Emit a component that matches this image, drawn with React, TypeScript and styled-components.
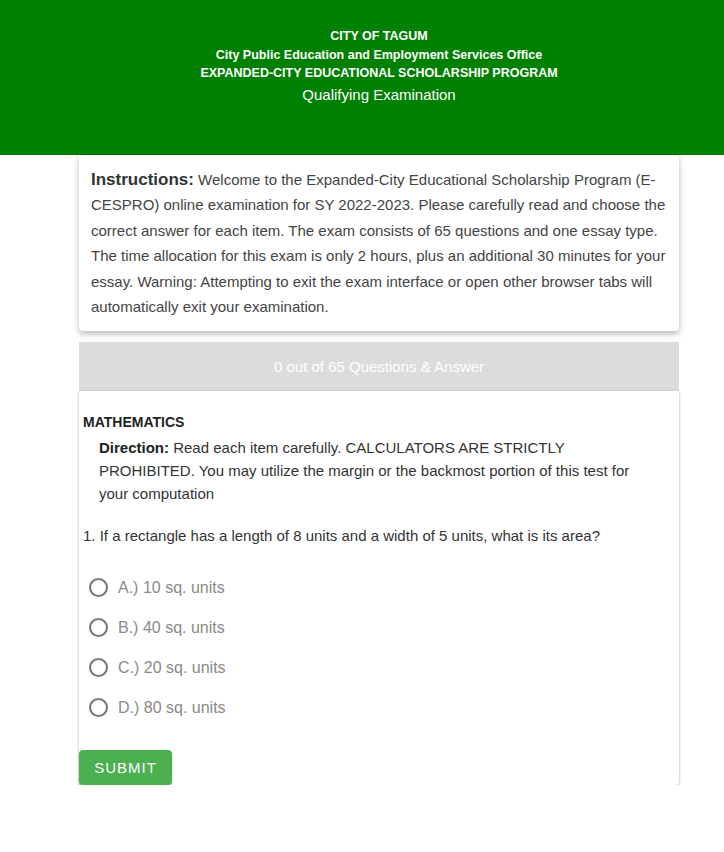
import React from 'react';
import styled, { createGlobalStyle } from 'styled-components';

const GlobalStyle = createGlobalStyle`
    body {
        margin: 0;
        background: #ffffff;
        font-family: "Liberation Sans", Arial, sans-serif;
    }
`;

const Page = styled.div`
    display: flex;
    flex-direction: column;
`;

const Header = styled.header`
    background: #008000;
    height: 155px;
    box-sizing: border-box;
    padding: 27px 0 0 34px;
    color: #ffffff;
    text-align: center;
`;

const HeaderLine = styled.div<{ $big?: boolean }>`
    font-size: ${(p) => (p.$big ? '15px' : '12.5px')};
    font-weight: ${(p) => (p.$big ? 400 : 700)};
    line-height: ${(p) => (p.$big ? '24px' : '18.5px')};
`;

const Main = styled.main`
    width: 600px;
    margin: 0 0 0 79px;
    display: flex;
    flex-direction: column;
`;

const InstructionCard = styled.section`
    background: #fff;
    border-radius: 0 0 4px 4px;
    box-shadow: 0 3px 6px rgba(0, 0, 0, 0.28);
    padding: 12px;
    font-size: 15px;
    line-height: 25.4px;
    color: #444;
`;

const Label = styled.strong`
    font-size: 17px;
    font-weight: 700;
    color: #333;
`;

const Progress = styled.div`
    margin-top: 11px;
    height: 49px;
    background: #dcdcdc;
    color: #fff;
    display: flex;
    align-items: center;
    justify-content: center;
    font-size: 15px;
`;

const QuestionCard = styled.section`
    background: #fff;
    border-radius: 0 0 4px 4px;
    box-shadow: 0 1px 3px rgba(0, 0, 0, 0.35);
    padding: 20px 0 0 0;
    display: flex;
    flex-direction: column;
`;

const Subject = styled.h3`
    margin: 0 0 0 4px;
    font-size: 14px;
    font-weight: 700;
    color: #222;
    line-height: 22px;
`;

const Direction = styled.p`
    margin: 4px 40px 0 20px;
    font-size: 15px;
    line-height: 22.8px;
    color: #333;

    b {
        font-weight: 700;
        color: #222;
    }
`;

const QuestionText = styled.p`
    margin: 19px 0 0 4px;
    font-size: 15px;
    line-height: 22px;
    color: #333;
`;

const Options = styled.div`
    margin-top: 26px;
    display: flex;
    flex-direction: column;
    gap: 10px;
    padding-left: 10px;
`;

const Option = styled.label`
    display: flex;
    align-items: center;
    gap: 10px;
    height: 30px;
    font-size: 16px;
    color: #8a8a8a;
    cursor: pointer;
`;

const Radio = styled.span`
    width: 15px;
    height: 15px;
    border: 2px solid #757575;
    border-radius: 50%;
`;

const SubmitButton = styled.button`
    margin-top: 27px;
    align-self: flex-start;
    width: 93px;
    height: 35px;
    border: none;
    border-radius: 4px;
    background: #4caf50;
    color: #fff;
    font-family: "Liberation Sans", Arial, sans-serif;
    font-size: 15px;
    font-weight: 400;
    letter-spacing: 1px;
    text-transform: uppercase;
    box-shadow: 0 2px 2px rgba(0, 0, 0, 0.2);
`;

const options = ['A.) 10 sq. units', 'B.) 40 sq. units', 'C.) 20 sq. units', 'D.) 80 sq. units'];

const App: React.FunctionComponent = () => {
    return (
        <Page>
            <GlobalStyle />
            <Header>
                <HeaderLine>CITY OF TAGUM</HeaderLine>
                <HeaderLine>City Public Education and Employment Services Office</HeaderLine>
                <HeaderLine>EXPANDED-CITY EDUCATIONAL SCHOLARSHIP PROGRAM</HeaderLine>
                <HeaderLine $big>Qualifying Examination</HeaderLine>
            </Header>
            <Main>
                <InstructionCard>
                    <Label>Instructions:</Label> Welcome to the Expanded-City Educational Scholarship Program (E-CESPRO)
                    online examination for SY 2022-2023. Please carefully read and choose the correct answer for each
                    item. The exam consists of 65 questions and one essay type. The time allocation for this exam is
                    only 2 hours, plus an additional 30 minutes for your essay. Warning: Attempting to exit the exam
                    interface or open other browser tabs will automatically exit your examination.
                </InstructionCard>
                <Progress>0 out of 65 Questions &amp; Answer</Progress>
                <QuestionCard>
                    <Subject>MATHEMATICS</Subject>
                    <Direction>
                        <b>Direction:</b> Read each item carefully. CALCULATORS ARE STRICTLY PROHIBITED. You may utilize
                        the margin or the backmost portion of this test for your computation
                    </Direction>
                    <QuestionText>
                        1. If a rectangle has a length of 8 units and a width of 5 units, what is its area?
                    </QuestionText>
                    <Options>
                        {options.map((o) => (
                            <Option key={o}>
                                <Radio />
                                {o}
                            </Option>
                        ))}
                    </Options>
                    <SubmitButton>Submit</SubmitButton>
                </QuestionCard>
            </Main>
        </Page>
    );
};

export default App;
